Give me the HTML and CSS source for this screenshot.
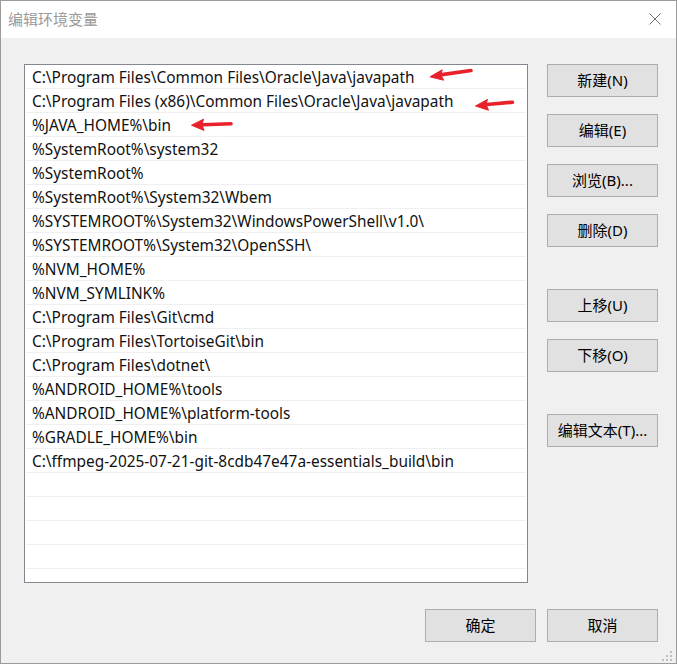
FILE: index.html
```html
<!DOCTYPE html>
<html lang="zh-CN">
<head>
<meta charset="utf-8">
<title>编辑环境变量</title>
<link rel="stylesheet" href="styles.css">
</head>
<body>
<div class="window">
  <div class="titlebar">
    <span class="title">编辑环境变量</span>
    <svg class="close" width="14" height="14" viewBox="0 0 14 14">
      <path d="M1.5 1.5 L12.5 12.5 M12.5 1.5 L1.5 12.5" stroke="#6f6f6f" stroke-width="1" fill="none"/>
    </svg>
  </div>
  <div class="content">
    <div class="main">
      <div class="list">
        <div class="row">C:\Program Files\Common Files\Oracle\Java\javapath</div>
        <div class="row">C:\Program Files (x86)\Common Files\Oracle\Java\javapath</div>
        <div class="row">%JAVA_HOME%\bin</div>
        <div class="row">%SystemRoot%\system32</div>
        <div class="row">%SystemRoot%</div>
        <div class="row">%SystemRoot%\System32\Wbem</div>
        <div class="row">%SYSTEMROOT%\System32\WindowsPowerShell\v1.0\</div>
        <div class="row">%SYSTEMROOT%\System32\OpenSSH\</div>
        <div class="row">%NVM_HOME%</div>
        <div class="row">%NVM_SYMLINK%</div>
        <div class="row">C:\Program Files\Git\cmd</div>
        <div class="row">C:\Program Files\TortoiseGit\bin</div>
        <div class="row">C:\Program Files\dotnet\</div>
        <div class="row">%ANDROID_HOME%\tools</div>
        <div class="row">%ANDROID_HOME%\platform-tools</div>
        <div class="row">%GRADLE_HOME%\bin</div>
        <div class="row">C:\ffmpeg-2025-07-21-git-8cdb47e47a-essentials_build\bin</div>
        <div class="row"></div>
        <div class="row"></div>
        <div class="row"></div>
        <div class="row"></div>
        <div class="row last"></div>
      </div>
      <div class="side">
        <div class="group">
          <button class="btn">新建(N)</button>
          <button class="btn">编辑(E)</button>
          <button class="btn">浏览(B)...</button>
          <button class="btn">删除(D)</button>
        </div>
        <div class="group">
          <button class="btn">上移(U)</button>
          <button class="btn">下移(O)</button>
        </div>
        <div class="group">
          <button class="btn">编辑文本(T)...</button>
        </div>
      </div>
    </div>
    <div class="footer">
      <button class="btn">确定</button>
      <button class="btn">取消</button>
    </div>
  </div>
  <svg class="annot" width="677" height="664" viewBox="0 0 677 664">
    <g fill="#e8212b" stroke="#e8212b" stroke-linejoin="round">
      <path d="M442 74.6 L471 70.5" stroke-width="3.6" stroke-linecap="round" fill="none"/>
      <path d="M430 76.8 L442.2 69.8 L440.8 74.8 L443.6 80.2 Z" stroke-width="1"/>
      <path d="M487 104.5 L512.5 102.2" stroke-width="3.6" stroke-linecap="round" fill="none"/>
      <path d="M475.5 106 L487.5 99.4 L486 104.4 L488.5 110.2 Z" stroke-width="1"/>
      <path d="M203 124.8 L231 123.8" stroke-width="3.6" stroke-linecap="round" fill="none"/>
      <path d="M191.5 125.2 L203.5 119.2 L202 124.6 L204 130.4 Z" stroke-width="1"/>
    </g>
  </svg>
  <div class="grip">
    <span class="dot d1"></span>
    <span class="dot d2"></span><span class="dot d3"></span>
    <span class="dot d4"></span><span class="dot d5"></span><span class="dot d6"></span>
  </div>
</div>
</body>
</html>
```
FILE: styles.css
```css
* { box-sizing: border-box; }
html, body {
  margin: 0;
  padding: 0;
  background: #f0f0f0;
}
body {
  font-family: "Noto Sans", "Noto Sans CJK SC", sans-serif;
  font-size: 15px;
  color: #000;
}
.window {
  position: relative;
  width: 677px;
  height: 664px;
  border: 1px solid #9b9b9b;
  background: #f0f0f0;
  display: flex;
  flex-direction: column;
  overflow: hidden;
}
.titlebar {
  height: 37px;
  background: #fff;
  display: flex;
  align-items: center;
  justify-content: space-between;
  padding: 0 14px 0 7px;
  flex: none;
}
.title {
  font-family: "Noto Sans CJK SC", sans-serif;
  font-size: 15px;
  color: #9a9a9a;
  line-height: 20px;
  margin-top: -1px;
}
.close {
  display: block;
  margin-top: -1px;
}
.content {
  flex: 1;
  padding: 26px 18px 21px 23px;
  display: flex;
  flex-direction: column;
}
.main {
  display: flex;
  gap: 19px;
}
.list {
  width: 504px;
  height: 519px;
  border: 1px solid #828790;
  background: #fff;
  overflow: hidden;
}
.row {
  height: 24px;
  margin: 0 1px;
  border-bottom: 1px solid #f0f0f0;
  line-height: 23px;
  padding: 1px 0 0 6px;
  white-space: nowrap;
  font-size: 15.4px;
  color: #111;
}
.row.last { border-bottom: none; }
.side {
  width: 111px;
  display: flex;
  flex-direction: column;
  gap: 42px;
}
.group {
  display: flex;
  flex-direction: column;
  gap: 17px;
}
.btn {
  width: 111px;
  height: 33px;
  border: 1px solid #adadad;
  background: #e1e1e1;
  font-family: "Noto Sans", "Noto Sans CJK SC", sans-serif;
  font-size: 15px;
  color: #000;
  padding: 0;
  margin: 0;
  line-height: 31px;
}
.footer {
  margin-top: 26px;
  display: flex;
  justify-content: flex-end;
  gap: 11px;
}
.annot {
  position: absolute;
  left: -1px;
  top: -1px;
  pointer-events: none;
}
.grip {
  position: absolute;
  right: 4px;
  bottom: 2px;
  width: 10px;
  height: 10px;
}
.dot {
  position: absolute;
  width: 2px;
  height: 2px;
  background: #bdbdbd;
}
.d1 { left: 8px; top: 0; }
.d2 { left: 4px; top: 4px; }
.d3 { left: 8px; top: 4px; }
.d4 { left: 0; top: 8px; }
.d5 { left: 4px; top: 8px; }
.d6 { left: 8px; top: 8px; }
```
